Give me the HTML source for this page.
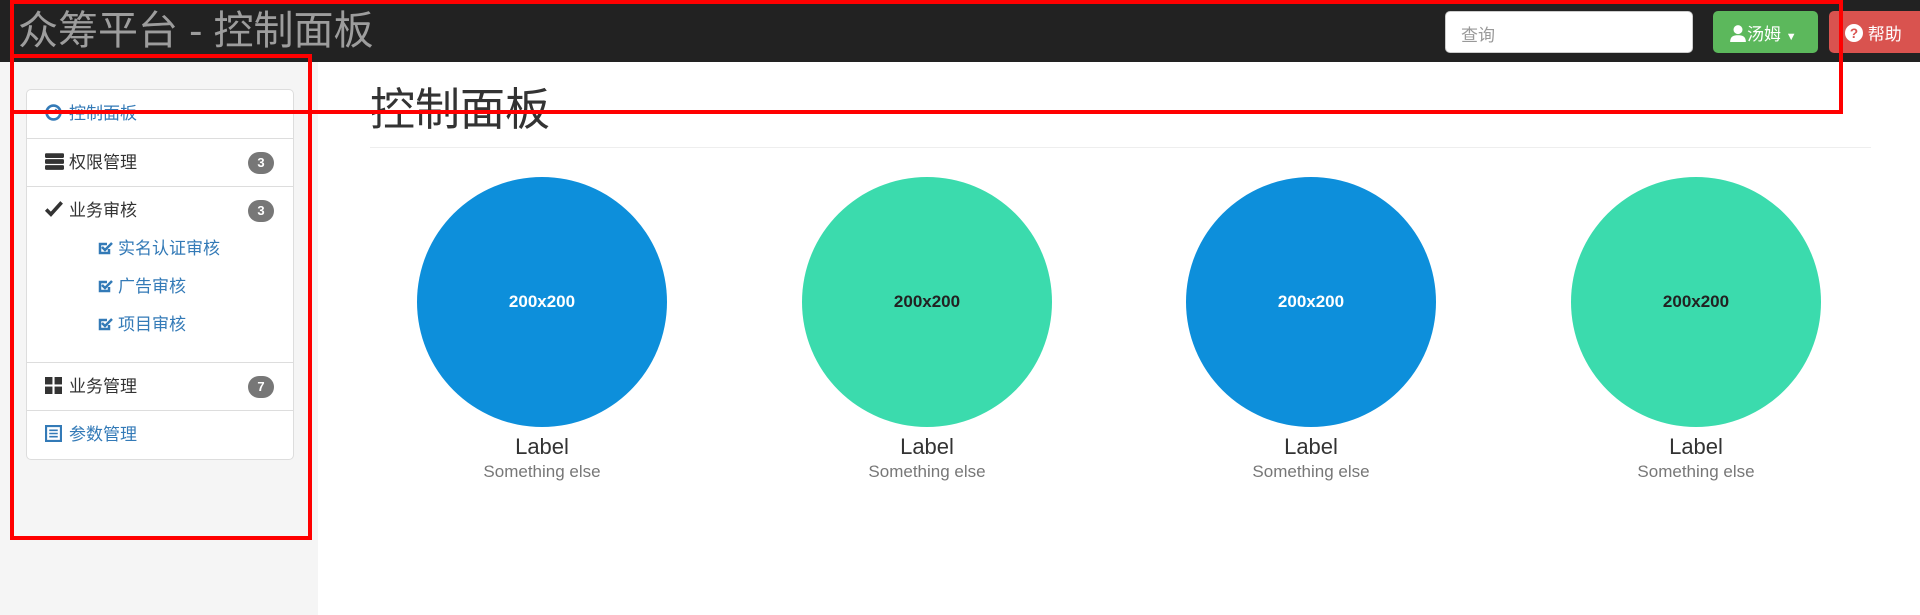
<!DOCTYPE html>
<html><head><meta charset="utf-8"><style>
*{box-sizing:border-box;margin:0;padding:0}
body{width:1920px;height:615px;overflow:hidden;background:#fff;font-family:"Liberation Sans","Noto Sans CJK SC",sans-serif;position:relative;color:#333}
.abs{position:absolute}
#hdr{left:0;top:0;width:1920px;height:62px;background:#222}
#title{left:18px;top:6px;font-size:40px;color:#9d9d9d;line-height:50px;white-space:nowrap}
#search{left:1445px;top:11px;width:248px;height:42px;background:#fff;border:1px solid #ccc;border-radius:5px;font-size:17px;color:#999;padding:9px 15px}
#green{left:1713px;top:11px;width:105px;height:42px;background:#5cb85c;border-radius:5px;color:#fff;font-size:17px;padding:9px 0 0 16px;white-space:nowrap}
#red{left:1829px;top:11px;width:100px;height:42px;background:#d9534f;border-radius:5px;color:#fff;font-size:17px;padding:9px 0 0 16px;white-space:nowrap}
#side{left:0;top:62px;width:318px;height:553px;background:#f5f5f5}
#panel{left:26px;top:89px;width:268px;height:371px;background:#fff;border:1px solid #ddd;border-radius:5px}
.row{position:absolute;left:0;width:266px;border-bottom:1px solid #ddd;font-size:17px;padding-left:18px}
.row span.t{position:absolute;left:42px}
.badge{position:absolute;right:19px;width:26px;height:22px;border-radius:11px;background:#777;color:#fff;font-size:13px;font-weight:bold;text-align:center;line-height:22px}
.blue{color:#337ab7}
.sub{position:absolute;left:70px;font-size:17px;color:#337ab7;white-space:nowrap}
.sub svg{vertical-align:-2px;margin-right:5px}
#h1{left:370px;top:82px;font-size:45px;line-height:56px;color:#333}
#hr{left:370px;top:147px;width:1501px;height:1px;background:#eee}
.c{position:absolute;top:177px;width:250px;height:250px;border-radius:50%;font-size:17px;font-weight:bold;text-align:center;line-height:250px}
.lab{position:absolute;width:300px;text-align:center}
.l1{top:434px;font-size:22px;color:#333}
.l2{top:462px;font-size:17px;color:#777}
.rb{position:absolute;border:4px solid #f00}
</style></head><body>
<div id="hdr" class="abs"></div>
<div id="title" class="abs">众筹平台 - 控制面板</div>
<div id="search" class="abs">查询</div>
<div id="green" class="abs"><svg width="18" height="18" viewBox="0 0 16 16" style="vertical-align:-2px"><circle cx="8" cy="5" r="4" fill="#fff"/><path d="M1 16c0-5 3-6 7-6s7 1 7 6z" fill="#fff"/></svg>汤姆 <span style="font-size:11px">▼</span></div>
<div id="red" class="abs"><svg width="18" height="18" viewBox="0 0 16 16" style="vertical-align:-2px"><circle cx="8" cy="8" r="8" fill="#fff"/><text x="8" y="12.5" font-size="12" font-weight="bold" text-anchor="middle" fill="#d9534f" font-family="Liberation Sans">?</text></svg> 帮助</div>
<div id="side" class="abs"></div>
<div id="panel" class="abs">
 <div class="row blue" style="top:0;height:49px;line-height:48px"><svg width="17" height="17" viewBox="0 0 16 16" style="vertical-align:-2px"><circle cx="8" cy="8" r="6.5" fill="none" stroke="#337ab7" stroke-width="2.5"/><path d="M8 8l3-3" stroke="#337ab7" stroke-width="2"/></svg><span class="t">控制面板</span></div>
 <div class="row" style="top:49px;height:48px;line-height:47px"><svg width="19" height="17" viewBox="0 0 16 14" style="vertical-align:-2px"><rect x="0" y="0" width="16" height="4" rx="1" fill="#333"/><rect x="0" y="5" width="16" height="4" rx="1" fill="#333"/><rect x="0" y="10" width="16" height="4" rx="1" fill="#333"/></svg><span class="t">权限管理</span><span class="badge" style="top:13px">3</span></div>
 <div class="row" style="top:97px;height:176px;line-height:47px"><svg width="19" height="17" viewBox="0 0 16 14" style="vertical-align:-2px"><path d="M1 7l4 4 9-10" fill="none" stroke="#333" stroke-width="3"/></svg><span class="t">业务审核</span><span class="badge" style="top:13px">3</span>
  <div class="sub" style="top:38px"><svg width="16" height="16" viewBox="0 0 16 16"><path d="M12 9v4H3V4h7" fill="none" stroke="#337ab7" stroke-width="2.5"/><path d="M5 7l3 3 7-7" fill="none" stroke="#337ab7" stroke-width="2.5"/></svg>实名认证审核</div>
  <div class="sub" style="top:76px"><svg width="16" height="16" viewBox="0 0 16 16"><path d="M12 9v4H3V4h7" fill="none" stroke="#337ab7" stroke-width="2.5"/><path d="M5 7l3 3 7-7" fill="none" stroke="#337ab7" stroke-width="2.5"/></svg>广告审核</div>
  <div class="sub" style="top:114px"><svg width="16" height="16" viewBox="0 0 16 16"><path d="M12 9v4H3V4h7" fill="none" stroke="#337ab7" stroke-width="2.5"/><path d="M5 7l3 3 7-7" fill="none" stroke="#337ab7" stroke-width="2.5"/></svg>项目审核</div>
 </div>
 <div class="row" style="top:273px;height:48px;line-height:47px"><svg width="17" height="17" viewBox="0 0 16 16" style="vertical-align:-2px"><rect x="0" y="0" width="7" height="7" fill="#333"/><rect x="9" y="0" width="7" height="7" fill="#333"/><rect x="0" y="9" width="7" height="7" fill="#333"/><rect x="9" y="9" width="7" height="7" fill="#333"/></svg><span class="t">业务管理</span><span class="badge" style="top:13px">7</span></div>
 <div class="row blue" style="top:321px;height:48px;line-height:47px;border-bottom:none"><svg width="17" height="17" viewBox="0 0 16 16" style="vertical-align:-2px"><rect x="1" y="1" width="14" height="14" fill="none" stroke="#337ab7" stroke-width="2"/><path d="M4 5h8M4 8h8M4 11h8" stroke="#337ab7" stroke-width="1.5"/></svg><span class="t">参数管理</span></div>
</div>
<div id="h1" class="abs">控制面板</div>
<div id="hr" class="abs"></div>
<div class="c" style="left:417px;background:#0d8fdb;color:#fff">200x200</div>
<div class="c" style="left:802px;background:#3bdbad;color:#222">200x200</div>
<div class="c" style="left:1186px;background:#0d8fdb;color:#fff">200x200</div>
<div class="c" style="left:1571px;background:#3bdbad;color:#222">200x200</div>
<div class="lab l1" style="left:392px">Label</div><div class="lab l2" style="left:392px">Something else</div>
<div class="lab l1" style="left:777px">Label</div><div class="lab l2" style="left:777px">Something else</div>
<div class="lab l1" style="left:1161px">Label</div><div class="lab l2" style="left:1161px">Something else</div>
<div class="lab l1" style="left:1546px">Label</div><div class="lab l2" style="left:1546px">Something else</div>
<div class="rb" style="left:10px;top:0;width:1833px;height:114px"></div>
<div class="rb" style="left:10px;top:54px;width:302px;height:486px"></div>
</body></html>
